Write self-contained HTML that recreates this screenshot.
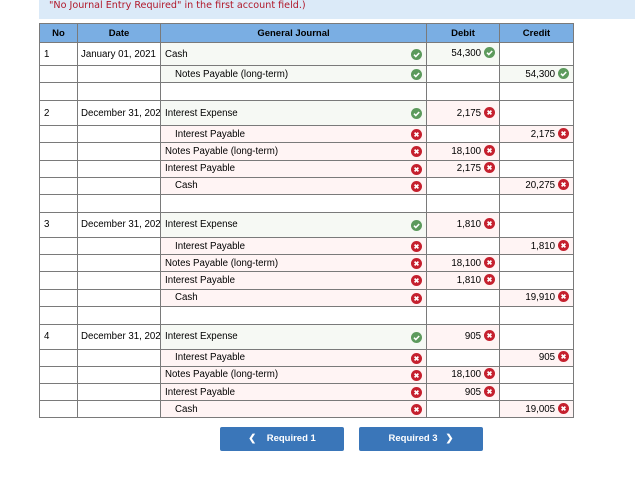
<!DOCTYPE html>
<html><head><style>
body{margin:0;width:635px;height:488px;background:#fff;font-family:"Liberation Sans",Arial,sans-serif;font-size:9.7px;color:#000;position:relative;overflow:hidden}
.ban{position:absolute;left:39px;top:0;width:596px;height:19px;background:#dbeaf8;color:#b0182a;font-family:"DejaVu Sans",sans-serif;font-size:9.6px}
.ban span{position:absolute;left:10px;top:0px}
table{position:absolute;left:39px;top:23px;border-collapse:collapse;table-layout:fixed;width:534px}
td,th{border:1px solid #7a7a7a;padding:0 4px;white-space:nowrap;overflow:hidden;position:relative;vertical-align:middle;line-height:11px}
th{background:#7aaee3;font-weight:bold;font-size:9.5px}
tr.h{height:19px}.a{height:25px}.a1{height:23px}.b{height:17.2px}.e{height:18px}
td.d{padding-left:3px;padding-right:0}
.g{background:#f6f9f4}.p{background:#fff4f4}
.r{text-align:right}
.ind{padding-left:14px}
.i{display:inline-block;width:11px;height:11px;vertical-align:middle;position:relative;top:-1px;margin-left:3px}
.gi{position:absolute;right:4px;top:50%;margin-top:-5px;width:11px;height:11px}
.btn{position:absolute;top:427px;width:124px;height:24px;background:#3a76b9;color:#fff;font-weight:bold;font-size:9.5px;line-height:24px;text-align:center;border-radius:2px}
</style></head><body>
<svg width="0" height="0" style="position:absolute"><defs>
<symbol id="c" viewBox="0 0 11 11"><circle cx="5.5" cy="5.5" r="5.5" fill="#5c9a5c"/><path d="M3 5.7l1.8 1.8L8.2 4" stroke="#fff" stroke-width="1.6" fill="none"/></symbol>
<symbol id="x" viewBox="0 0 11 11"><circle cx="5.5" cy="5.5" r="5.5" fill="#c5202e"/><path d="M3.6 3.6l3.8 3.8M7.4 3.6L3.6 7.4" stroke="#fff" stroke-width="1.7"/></symbol>
</defs></svg>
<div class="ban"><span>"No Journal Entry Required" in the first account field.)</span></div>
<table>
<colgroup><col style="width:38px"><col style="width:83px"><col style="width:266px"><col style="width:73px"><col style="width:74px"></colgroup>
<tr class="h"><th>No</th><th>Date</th><th>General Journal</th><th>Debit</th><th>Credit</th></tr>
<tr class="a1"><td>1</td><td class="d">January 01, 2021</td><td class="g">Cash<svg class="gi"><use href="#c"/></svg></td><td class="g r">54,300<svg class="i"><use href="#c"/></svg></td><td></td></tr>
<tr class="b"><td></td><td></td><td class="g ind">Notes Payable (long-term)<svg class="gi"><use href="#c"/></svg></td><td></td><td class="g r">54,300<svg class="i"><use href="#c"/></svg></td></tr>
<tr class="e"><td>&nbsp;</td><td></td><td></td><td></td><td></td></tr>

<tr class="a"><td>2</td><td class="d">December 31, 2021</td><td class="g">Interest Expense<svg class="gi"><use href="#c"/></svg></td><td class="p r">2,175<svg class="i"><use href="#x"/></svg></td><td></td></tr>
<tr class="b"><td></td><td></td><td class="p ind">Interest Payable<svg class="gi"><use href="#x"/></svg></td><td></td><td class="p r">2,175<svg class="i"><use href="#x"/></svg></td></tr>
<tr class="b"><td></td><td></td><td class="p">Notes Payable (long-term)<svg class="gi"><use href="#x"/></svg></td><td class="p r">18,100<svg class="i"><use href="#x"/></svg></td><td></td></tr>
<tr class="b"><td></td><td></td><td class="p">Interest Payable<svg class="gi"><use href="#x"/></svg></td><td class="p r">2,175<svg class="i"><use href="#x"/></svg></td><td></td></tr>
<tr class="b"><td></td><td></td><td class="p ind">Cash<svg class="gi"><use href="#x"/></svg></td><td></td><td class="p r">20,275<svg class="i"><use href="#x"/></svg></td></tr>
<tr class="e"><td>&nbsp;</td><td></td><td></td><td></td><td></td></tr>

<tr class="a"><td>3</td><td class="d">December 31, 2022</td><td class="g">Interest Expense<svg class="gi"><use href="#c"/></svg></td><td class="p r">1,810<svg class="i"><use href="#x"/></svg></td><td></td></tr>
<tr class="b"><td></td><td></td><td class="p ind">Interest Payable<svg class="gi"><use href="#x"/></svg></td><td></td><td class="p r">1,810<svg class="i"><use href="#x"/></svg></td></tr>
<tr class="b"><td></td><td></td><td class="p">Notes Payable (long-term)<svg class="gi"><use href="#x"/></svg></td><td class="p r">18,100<svg class="i"><use href="#x"/></svg></td><td></td></tr>
<tr class="b"><td></td><td></td><td class="p">Interest Payable<svg class="gi"><use href="#x"/></svg></td><td class="p r">1,810<svg class="i"><use href="#x"/></svg></td><td></td></tr>
<tr class="b"><td></td><td></td><td class="p ind">Cash<svg class="gi"><use href="#x"/></svg></td><td></td><td class="p r">19,910<svg class="i"><use href="#x"/></svg></td></tr>
<tr class="e"><td>&nbsp;</td><td></td><td></td><td></td><td></td></tr>

<tr class="a"><td>4</td><td class="d">December 31, 2023</td><td class="g">Interest Expense<svg class="gi"><use href="#c"/></svg></td><td class="p r">905<svg class="i"><use href="#x"/></svg></td><td></td></tr>
<tr class="b"><td></td><td></td><td class="p ind">Interest Payable<svg class="gi"><use href="#x"/></svg></td><td></td><td class="p r">905<svg class="i"><use href="#x"/></svg></td></tr>
<tr class="b"><td></td><td></td><td class="p">Notes Payable (long-term)<svg class="gi"><use href="#x"/></svg></td><td class="p r">18,100<svg class="i"><use href="#x"/></svg></td><td></td></tr>
<tr class="b"><td></td><td></td><td class="p">Interest Payable<svg class="gi"><use href="#x"/></svg></td><td class="p r">905<svg class="i"><use href="#x"/></svg></td><td></td></tr>
<tr class="b"><td></td><td></td><td class="p ind">Cash<svg class="gi"><use href="#x"/></svg></td><td></td><td class="p r">19,005<svg class="i"><use href="#x"/></svg></td></tr>
</table>
<div class="btn" style="left:220px">&#10094;&nbsp;&nbsp;&nbsp; Required 1</div>
<div class="btn" style="left:359px">Required 3 &nbsp;&nbsp;&#10095;</div>
</body></html>
